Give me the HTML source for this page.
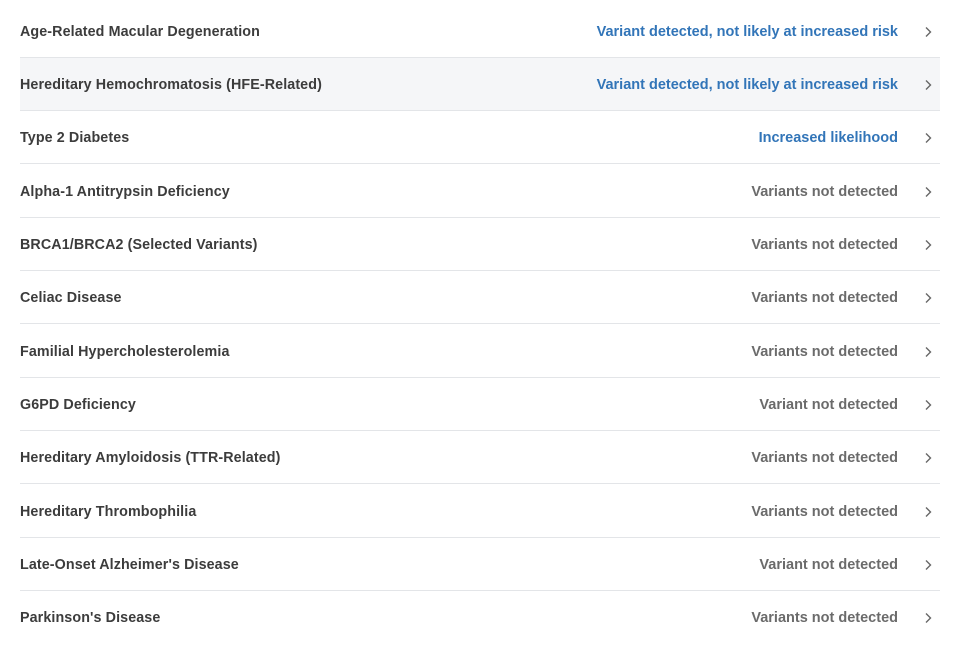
<!DOCTYPE html>
<html><head><meta charset="utf-8"><style>
body{margin:0;width:960px;height:650px;background:#fff;font-family:"Liberation Sans",sans-serif;position:relative;overflow:hidden}
.r{position:absolute;left:20px;width:920px;height:53px;border-bottom:1px solid #e3e5e8;box-sizing:border-box}
.r.last{border-bottom:none}
.r.hl{background:#f5f6f8}
.n{position:absolute;left:0;top:1px;line-height:53px;font-size:14.3px;font-weight:bold;color:#3c3c3c;letter-spacing:0.1px}
.s{position:absolute;right:42px;top:1px;line-height:53px;font-size:14.5px;font-weight:bold;color:#6b6b6b;letter-spacing:0}
.s.b{color:#3275b8}
.c{position:absolute;right:8px;top:21px}
</style></head><body>
<div class="r" style="top:5px"><span class="n">Age-Related Macular Degeneration</span><span class="s b">Variant detected, not likely at increased risk</span><svg class="c" width="8" height="12" viewBox="0 0 8 12"><path d="M2 1.5L6.5 6L2 10.5" fill="none" stroke="#666" stroke-width="1.4"/></svg></div>
<div class="r hl" style="top:58px"><span class="n">Hereditary Hemochromatosis (HFE-Related)</span><span class="s b">Variant detected, not likely at increased risk</span><svg class="c" width="8" height="12" viewBox="0 0 8 12"><path d="M2 1.5L6.5 6L2 10.5" fill="none" stroke="#666" stroke-width="1.4"/></svg></div>
<div class="r" style="top:111px"><span class="n">Type 2 Diabetes</span><span class="s b">Increased likelihood</span><svg class="c" width="8" height="12" viewBox="0 0 8 12"><path d="M2 1.5L6.5 6L2 10.5" fill="none" stroke="#666" stroke-width="1.4"/></svg></div>
<div class="r" style="top:165px"><span class="n">Alpha-1 Antitrypsin Deficiency</span><span class="s">Variants not detected</span><svg class="c" width="8" height="12" viewBox="0 0 8 12"><path d="M2 1.5L6.5 6L2 10.5" fill="none" stroke="#666" stroke-width="1.4"/></svg></div>
<div class="r" style="top:218px"><span class="n">BRCA1/BRCA2 (Selected Variants)</span><span class="s">Variants not detected</span><svg class="c" width="8" height="12" viewBox="0 0 8 12"><path d="M2 1.5L6.5 6L2 10.5" fill="none" stroke="#666" stroke-width="1.4"/></svg></div>
<div class="r" style="top:271px"><span class="n">Celiac Disease</span><span class="s">Variants not detected</span><svg class="c" width="8" height="12" viewBox="0 0 8 12"><path d="M2 1.5L6.5 6L2 10.5" fill="none" stroke="#666" stroke-width="1.4"/></svg></div>
<div class="r" style="top:325px"><span class="n">Familial Hypercholesterolemia</span><span class="s">Variants not detected</span><svg class="c" width="8" height="12" viewBox="0 0 8 12"><path d="M2 1.5L6.5 6L2 10.5" fill="none" stroke="#666" stroke-width="1.4"/></svg></div>
<div class="r" style="top:378px"><span class="n">G6PD Deficiency</span><span class="s">Variant not detected</span><svg class="c" width="8" height="12" viewBox="0 0 8 12"><path d="M2 1.5L6.5 6L2 10.5" fill="none" stroke="#666" stroke-width="1.4"/></svg></div>
<div class="r" style="top:431px"><span class="n">Hereditary Amyloidosis (TTR-Related)</span><span class="s">Variants not detected</span><svg class="c" width="8" height="12" viewBox="0 0 8 12"><path d="M2 1.5L6.5 6L2 10.5" fill="none" stroke="#666" stroke-width="1.4"/></svg></div>
<div class="r" style="top:485px"><span class="n">Hereditary Thrombophilia</span><span class="s">Variants not detected</span><svg class="c" width="8" height="12" viewBox="0 0 8 12"><path d="M2 1.5L6.5 6L2 10.5" fill="none" stroke="#666" stroke-width="1.4"/></svg></div>
<div class="r" style="top:538px"><span class="n">Late-Onset Alzheimer's Disease</span><span class="s">Variant not detected</span><svg class="c" width="8" height="12" viewBox="0 0 8 12"><path d="M2 1.5L6.5 6L2 10.5" fill="none" stroke="#666" stroke-width="1.4"/></svg></div>
<div class="r last" style="top:591px"><span class="n">Parkinson's Disease</span><span class="s">Variants not detected</span><svg class="c" width="8" height="12" viewBox="0 0 8 12"><path d="M2 1.5L6.5 6L2 10.5" fill="none" stroke="#666" stroke-width="1.4"/></svg></div>
</body></html>
